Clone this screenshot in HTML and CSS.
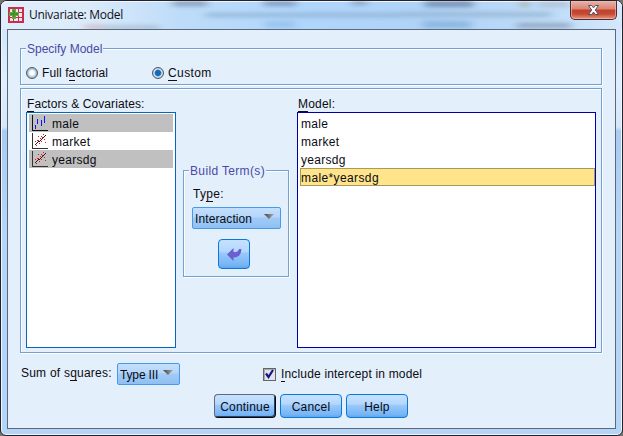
FILE: index.html
```html
<!DOCTYPE html>
<html lang="en">
<head>
<meta charset="utf-8">
<title>Univariate: Model</title>
<link rel="stylesheet" href="styles.css">
</head>
<body>
<div class="window">
  <header class="titlebar">
    <svg class="glass" width="621" height="28" aria-hidden="true">
      <defs><filter id="soft" filterUnits="userSpaceOnUse" x="0" y="-10" width="621" height="48"><feGaussianBlur stdDeviation="4 2"/></filter></defs>
      <g filter="url(#soft)">
        <rect x="205" y="12" width="265" height="4" fill="#86a9c8"/>
        <rect x="400" y="11" width="150" height="5" fill="#91b0cd"/>
        <rect x="172" y="0" width="34" height="5" fill="#74859f"/>
        <rect x="263" y="0" width="32" height="5" fill="#6d83a5"/>
        <rect x="351" y="0" width="15" height="4" fill="#7588a5"/>
        <rect x="424" y="0" width="48" height="6" fill="#60789a"/>
        <rect x="264" y="20" width="30" height="7" fill="#8fbde9"/>
        <rect x="422" y="20" width="48" height="7" fill="#7eaad8"/>
        <rect x="516" y="22" width="54" height="5" fill="#8094ad"/>
        <rect x="519" y="1" width="9" height="5" fill="#a5a184"/>
        <rect x="538" y="1" width="30" height="5" fill="#a9b9c9"/>
        <rect x="84" y="24" width="16" height="4" fill="#c9a4ac"/>
        <rect x="100" y="25" width="58" height="3" fill="#8fa3bc"/>
      </g>
    </svg>
    <svg class="appicon" width="16" height="16" shape-rendering="crispEdges" aria-hidden="true">
      <rect width="16" height="16" fill="#c92c4c"/>
      <path fill="#fbe7eb" d="M2 2h3v3H2zM6 2h4v3H6zM11 2h3v3h-3zM2 6h3v4H2zM6 6h4v4H6zM11 6h3v4h-3zM2 11h3v3H2zM6 11h4v3H6zM11 11h3v3h-3z"/>
      <path d="M4 2h4v3h3v4H8v3H4V9H1V5h3z" fill="#66aa45"/>
      <path d="M5 3h2v7H5zM2 6h8v2H2z" fill="#43912c"/>
    </svg>
    <span class="caption">Univariate: Model</span>
    <div class="close">
      <svg width="13" height="12" viewBox="0 0 13 12"><path d="M1.5 1.5h3l2 2.3 2-2.3h3L8.3 6l3.2 4.5h-3l-2-2.4-2 2.4h-3L4.7 6z" fill="#fff" stroke="#4b4f66" stroke-width="1"/></svg>
    </div>
  </header>

  <main class="client">
    <fieldset class="group specify">
      <legend>Specify Model</legend>
      <div class="radios">
        <label class="radio"><i class="dot"></i><span class="t-full">Full f<u>a</u>ctorial</span></label>
        <label class="radio on"><i class="dot"></i><span class="t-custom"><u>C</u>ustom</span></label>
      </div>
    </fieldset>

    <section class="panel">
      <div class="column">
        <div class="heading t-factors"><u>F</u>actors &amp; Covariates:</div>
        <ul class="list factors">
          <li class="picked">
            <svg width="16" height="16" shape-rendering="crispEdges"><path d="M0 0h1v15h15v1H0z" fill="#111"/><path d="M3 10h1v4H3zM5 4h1v5H5zM9 5h1v6H9zM12 1h1v7h-1z" fill="#1010ff"/></svg>
            <span>male</span></li>
          <li>
            <svg width="16" height="16" shape-rendering="crispEdges"><use href="#scatter"/></svg>
            <span>market</span></li>
          <li class="picked">
            <svg width="16" height="16" shape-rendering="crispEdges"><defs><g id="scatter"><path d="M0 0h1v15h15v1H0z" fill="#333"/><path d="M3 11h1v1H3zM4 10h1v1H4zM5 9h1v1H5zM6 8h2v1H6zM8 7h1v1H8zM9 6h1v1H9zM10 5h1v1h-1zM11 4h1v1h-1zM12 3h1v1h-1zM13 2h1v1h-1z" fill="#222"/><path d="M3 8h1v1H3zM6 3h1v1H6zM5 7h1v1H5zM9 3h1v1H9zM11 1h1v1h-1zM7 10h1v1H7zM12 6h1v1h-1zM13 9h1v1h-1zM9 8h1v1H9zM8 5h1v1H8zM4 12h1v1H4zM10 4h1v1h-1zM6 7h1v1H6z" fill="#ff1018"/></g></defs><use href="#scatter"/></svg>
            <span>yearsdg</span></li>
        </ul>
      </div>

      <fieldset class="group build">
        <legend>Build Term(s)</legend>
        <div class="type">Ty<u>p</u>e:</div>
        <div class="combo wide"><span>Interaction</span><svg width="10" height="6"><use href="#tri"/></svg></div>
        <button class="push arrow" aria-label="Add term">
          <svg width="15" height="14"><path d="M0 6.500L6.500 0v4C9.500 4.500 11.500 3.500 12 1h2.300C14.500 6 12 9.300 6.500 9.500V13z" fill="#6a5fce"/></svg>
        </button>
      </fieldset>

      <div class="column">
        <div class="heading t-model"><u>M</u>odel:</div>
        <ul class="list model">
          <li>male</li>
          <li>market</li>
          <li>yearsdg</li>
          <li class="current">male*yearsdg</li>
        </ul>
      </div>
    </section>

    <div class="options">
      <span class="sum">Sum of s<u>q</u>uares:</span>
      <div class="combo narrow"><span>Type III</span><svg width="10" height="6"><defs><linearGradient id="tg"><stop offset="0" stop-color="#444"/><stop offset="1" stop-color="#a9a9a9"/></linearGradient><path id="tri" d="M0 0h10L5 5z" fill="url(#tg)"/></defs><use href="#tri"/></svg></div>
      <label class="check"><i class="box"><svg width="9" height="10"><path d="M1 4.500L3.500 8 8 1" fill="none" stroke="#14148c" stroke-width="2.200"/></svg></i><span class="t-include"><u>I</u>nclude intercept in model</span></label>
    </div>

    <div class="buttons">
      <button class="push default">Continue</button>
      <button class="push">Cancel</button>
      <button class="push">Help</button>
    </div>
  </main>
</div>
</body>
</html>
```

FILE: styles.css
```css
* { box-sizing: border-box; }
body {
  margin: 0;
  background: #77736b;
  color: #0b0b12;
  font: 12px/14px "Liberation Sans", Arial, sans-serif;
  overflow: hidden;
}
.window {
  width: 623px;
  height: 436px;
  padding: 0 6px 6px;
  border: 1px solid #24222c;
  border-radius: 7px 7px 6px 6px;
  background: linear-gradient(#c9e2fb 0, #dfeeff 80px, #d6e7fa 126px, #a9cbf4 130px, #b6d6f9 230px, #b5d5f8 100%);
  box-shadow: inset 0 0 0 1px #eef7ff;
}
.titlebar {
  position: relative;
  display: flex;
  height: 28px;
  margin: 0 -6px;
  padding-left: 7px;
  border-radius: 6px 6px 0 0;
  overflow: hidden;
  background: linear-gradient(90deg, #e0eefb 0, #dcebfa 85px, #bddcf9 180px, #b1d6fc 300px, #afd3f7 430px, #bfdcf8 550px, #d5e8fb 621px);
  box-shadow: inset 0 1px #eef7ff;
}
.glass { position: absolute; left: 0; top: 0; opacity: .7; }
.appicon { position: relative; margin-top: 6px; }
.caption {
  position: relative;
  margin: 5px 0 0 5px;
  font: 12px/17px "Open Sans", "Noto Sans", sans-serif;
  letter-spacing: -.28px;
  color: #101018;
}
.close {
  position: relative;
  display: flex;
  justify-content: center;
  width: 47px;
  height: 19px;
  margin: 0 5px 0 auto;
  padding-top: 3px;
  border: 1px solid #532630;
  border-top: 0;
  border-radius: 0 0 5px 5px;
  background: linear-gradient(#e8b2a8 0, #d98673 8px, #c2402b 9px, #c74a33 13px, #e19a80 100%);
  box-shadow: inset 0 0 0 1px #f0c0b5a0;
}
.client {
  height: 400px;
  padding: 11px 13px 0 12px;
  border: 1px solid #5b6878;
  background: #e3effb;
}
u {
  text-decoration: none;
  background: linear-gradient(#111, #111) 0 100% / 100% 1px no-repeat;
  padding-bottom: 1px;
}
.group {
  min-width: 0;
  margin: 0;
  padding: 0;
  border: 1px solid #72a2d3;
  box-shadow: 1px 1px #fff, inset 1px 1px #fff;
}
legend {
  height: 15px;
  margin-left: 5px;
  padding: 0 1px;
  line-height: 16px;
  color: #4a49a8;
  background: #e3effb;
}
.specify { width: 582px; height: 44px; }
.radios { display: flex; padding: 10px 0 0 5px; }
.radio { display: flex; align-items: center; gap: 4px; width: 126px; }
.t-full { letter-spacing: .1px; }
.t-custom { letter-spacing: .4px; }
.dot {
  width: 12px;
  height: 12px;
  margin-top: -1px;
  border: 1px solid #4d5966;
  border-radius: 50%;
  background: radial-gradient(circle, #fff 0 2px, #d5e5f3 3px, #9cb0c2 5px);
}
.on .dot { background: radial-gradient(circle, #1769b8 0 2.5px, #4f9be0 3.2px, #eaf3fa 4px, #a9bccc 5px); }
.panel {
  display: grid;
  grid-template-columns: 150px 106px 300px;
  column-gap: 7px;
  width: 582px;
  height: 265px;
  margin-top: 3px;
  padding: 8px 0 0 5px;
  border: 1px solid #72a2d3;
  box-shadow: 1px 1px #fff, inset 1px 1px #fff;
}
.column:last-child { margin-left: 1px; }
.heading { height: 15px; padding-left: 1px; letter-spacing: .1px; }
.t-model { letter-spacing: .2px; }
.list {
  height: 236px;
  margin: 0;
  padding: 1px 2px;
  border: 1px solid #0b65b5;
  background: #fff;
  list-style: none;
}
.list li { display: flex; align-items: center; height: 18px; padding: 2px 1px 0; letter-spacing: .3px; }
.factors li { gap: 4px; padding: 0 0 0 3px; }
.factors span { padding-top: 1px; }
.factors .picked { background: #c0c0c0; }
.list.model { padding: 1px 0 0 2px; border-color: #0000a8; }
.list .current {
  padding: 2px 0 0;
  border: 1px solid #a9995a;
  background: #ffe48b;
  letter-spacing: .38px;
}
.build { width: 106px; height: 114px; margin: 66px 0 0; }
.build legend { letter-spacing: .35px; }
.type { margin: 9px 0 0 9px; letter-spacing: .3px; }
.combo {
  display: flex;
  align-items: center;
  justify-content: space-between;
  height: 22px;
  border: 1px solid #459be9;
  border-radius: 2px;
  background: linear-gradient(#c3dffc, #b4d5fa 45%, #a1cbf6 50%, #8fc0f2);
}
.wide { width: 89px; margin: 6px 0 0 8px; padding: 0 6px 0 2px; letter-spacing: .1px; }
.narrow { width: 63px; margin-left: 5px; padding: 0 6px 0 2px; letter-spacing: -.15px; }
.combo span { padding-top: 1px; }
.combo svg { margin-bottom: 2px; }
.push {
  width: 62px;
  height: 24px;
  padding: 1px 0 0;
  border: 1px solid #0a78d7;
  border-radius: 4px;
  background: linear-gradient(#c6e1ff, #b4d7fd 42%, #9bc9fa 46%, #74b4f5 90%, #62a5ea);
  color: inherit;
  font: inherit;
  letter-spacing: .2px;
}
.arrow { display: flex; align-items: center; justify-content: center; width: 32px; height: 30px; margin: 10px 0 0 34px; }
.default { border-color: #626b75 #05070a #05070a #626b75; box-shadow: inset -1px -1px #23466e; }
.options { display: flex; height: 22px; margin-top: 10px; align-items: center; }
.sum { width: 91px; margin: -2px 0 0 1px; letter-spacing: .22px; }
.check { display: flex; align-items: center; gap: 5px; margin-left: 83px; letter-spacing: .17px; }
.box {
  display: grid;
  place-items: center;
  width: 13px;
  height: 13px;
  border: 1px solid #666;
  background: #e2e2ea;
  box-shadow: inset 1px 1px #aaa;
}
.buttons { display: flex; gap: 4px; margin: 9px 0 0 194px; }
```
